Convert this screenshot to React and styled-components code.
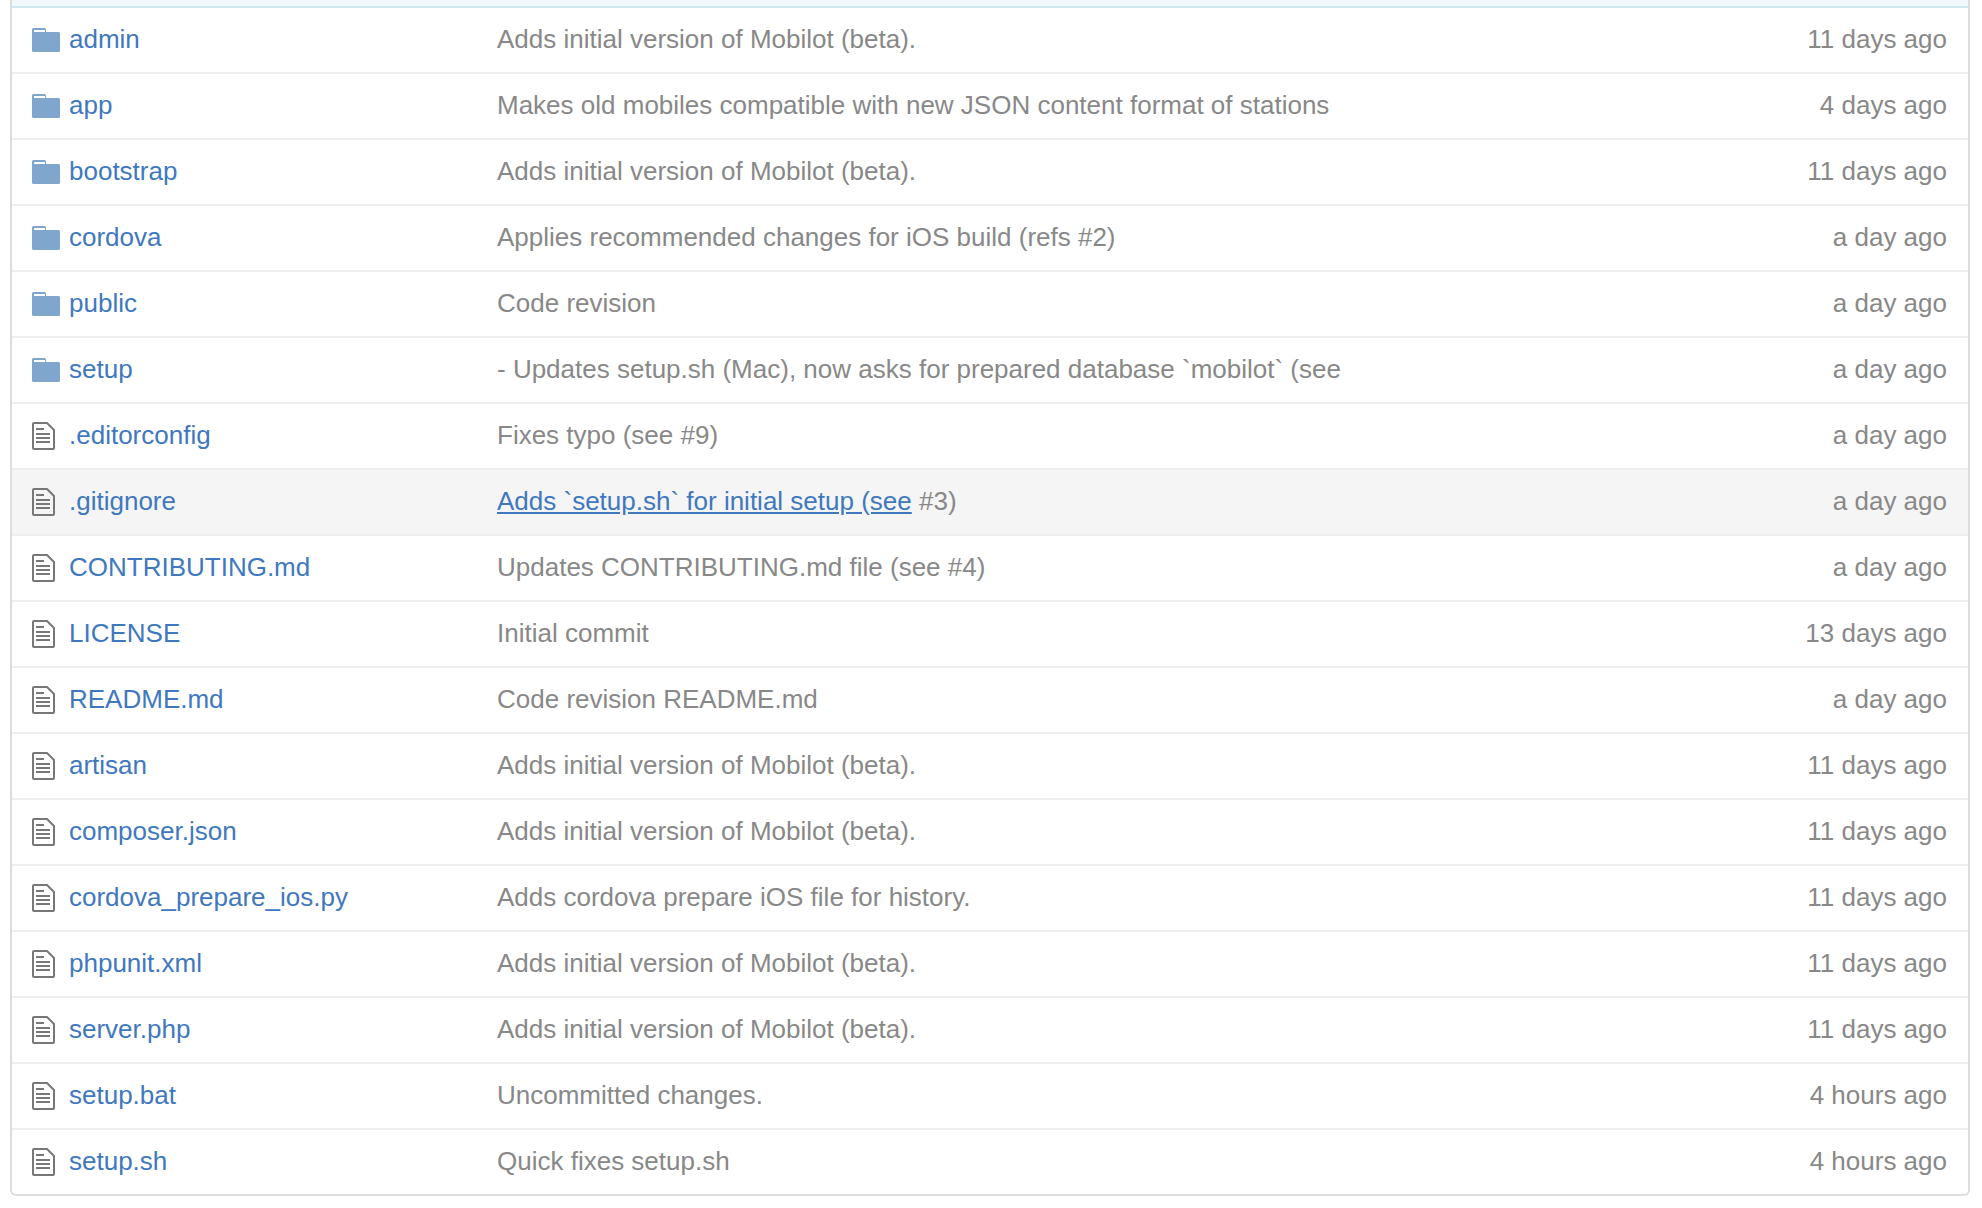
import React from 'react';
import styled, { createGlobalStyle } from 'styled-components';

const GlobalStyle = createGlobalStyle`
  html, body {
    margin: 0;
    padding: 0;
    background: #fff;
    font-family: "Liberation Sans", Arial, sans-serif;
  }
`;

const Page = styled.div`
  width: 1982px;
  height: 1208px;
  padding: 0 12px 0 10px;
  box-sizing: border-box;
  overflow: hidden;
`;

const Box = styled.div`
  border: 2px solid #ddd;
  border-top: none;
  border-radius: 0 0 6px 6px;
`;

const Tease = styled.div`
  height: 6px;
  background: #f0f8fc;
  border-bottom: 2px solid #cfe6f3;
`;

const Row = styled.div`
  display: flex;
  align-items: center;
  box-sizing: border-box;
  height: ${(p) => (p.$first ? '64px' : '66px')};
  padding: 0 21px 0 20px;
  font-size: 26px;
  background: ${(p) => (p.$hover ? '#f5f5f5' : 'transparent')};
  border-top: ${(p) => (p.$first ? 'none' : '2px solid #eee')};
`;

const IconCell = styled.span`
  width: 37px;
  flex: none;
  display: flex;
  align-items: center;
`;

const Name = styled.a`
  width: 428px;
  flex: none;
  padding-bottom: 2px;
  color: #4078c0;
`;

const Message = styled.span`
  flex: 1;
  padding-bottom: 2px;
  color: #888;
`;

const MessageLink = styled.a`
  color: #4078c0;
  text-decoration: underline;
`;

const Age = styled.span`
  padding-bottom: 2px;
  color: #888;
`;

const FolderIcon = () => (
  <svg width="28" height="24" viewBox="0 0 28 24">
    <path
      fill="#80a6cd"
      fillRule="evenodd"
      d="M1.5 0H12.5A1.5 1.5 0 0 1 14 1.5V4H26.5A1.5 1.5 0 0 1 28 5.5V22.5A1.5 1.5 0 0 1 26.5 24H1.5A1.5 1.5 0 0 1 0 22.5V1.5A1.5 1.5 0 0 1 1.5 0ZM2 2V4H13V2Z"
    />
  </svg>
);

const FileIcon = () => (
  <svg width="23" height="28" viewBox="0 0 23 28">
    <path
      fill="none"
      stroke="#777"
      strokeWidth="2"
      strokeLinejoin="round"
      d="M2 1H15L22 8V26A1 1 0 0 1 21 27H2A1 1 0 0 1 1 26V2A1 1 0 0 1 2 1Z"
    />
    <path fill="#777" d="M4 6H12V8H4ZM4 11H18V13H4ZM4 15H18V17H4ZM4 19H18V21H4Z" />
  </svg>
);

const initial = 'Adds initial version of Mobilot (beta).';

const rows = [
  { type: 'dir', name: 'admin', message: initial, age: '11 days ago' },
  { type: 'dir', name: 'app', message: 'Makes old mobiles compatible with new JSON content format of stations', age: '4 days ago' },
  { type: 'dir', name: 'bootstrap', message: initial, age: '11 days ago' },
  { type: 'dir', name: 'cordova', message: 'Applies recommended changes for iOS build (refs #2)', age: 'a day ago' },
  { type: 'dir', name: 'public', message: 'Code revision', age: 'a day ago' },
  { type: 'dir', name: 'setup', message: '- Updates setup.sh (Mac), now asks for prepared database `mobilot` (see', age: 'a day ago' },
  { type: 'file', name: '.editorconfig', message: 'Fixes typo (see #9)', age: 'a day ago' },
  { type: 'file', name: '.gitignore', link: 'Adds `setup.sh` for initial setup (see', message: ' #3)', age: 'a day ago', hover: true },
  { type: 'file', name: 'CONTRIBUTING.md', message: 'Updates CONTRIBUTING.md file (see #4)', age: 'a day ago' },
  { type: 'file', name: 'LICENSE', message: 'Initial commit', age: '13 days ago' },
  { type: 'file', name: 'README.md', message: 'Code revision README.md', age: 'a day ago' },
  { type: 'file', name: 'artisan', message: initial, age: '11 days ago' },
  { type: 'file', name: 'composer.json', message: initial, age: '11 days ago' },
  { type: 'file', name: 'cordova_prepare_ios.py', message: 'Adds cordova prepare iOS file for history.', age: '11 days ago' },
  { type: 'file', name: 'phpunit.xml', message: initial, age: '11 days ago' },
  { type: 'file', name: 'server.php', message: initial, age: '11 days ago' },
  { type: 'file', name: 'setup.bat', message: 'Uncommitted changes.', age: '4 hours ago' },
  { type: 'file', name: 'setup.sh', message: 'Quick fixes setup.sh', age: '4 hours ago' },
];

export default function App() {
  return (
    <Page>
      <GlobalStyle />
      <Box>
        <Tease />
        {rows.map((row, i) => (
          <Row key={row.name} $first={i === 0} $hover={row.hover}>
            <IconCell>{row.type === 'dir' ? <FolderIcon /> : <FileIcon />}</IconCell>
            <Name>{row.name}</Name>
            <Message>
              {row.link && <MessageLink>{row.link}</MessageLink>}
              {row.message}
            </Message>
            <Age>{row.age}</Age>
          </Row>
        ))}
      </Box>
    </Page>
  );
}
